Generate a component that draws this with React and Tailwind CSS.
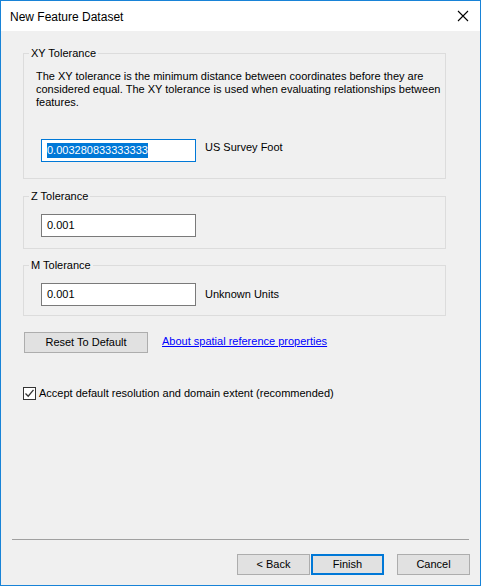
import React from "react";

function CloseIcon() {
  return (
    <svg width="12" height="12" viewBox="0 0 12 12" className="block">
      <path d="M1 1 L11 11 M11 1 L1 11" stroke="#000" strokeWidth="1.1" fill="none" />
    </svg>
  );
}

function CheckBox() {
  return (
    <div className="w-[13px] h-[13px] border border-[#333333] bg-white flex items-center justify-center">
      <svg width="11" height="11" viewBox="0 0 11 11" className="block">
        <path d="M1.5 5.5 L4.2 8.2 L9.5 1.8" stroke="#333333" strokeWidth="1.3" fill="none" />
      </svg>
    </div>
  );
}

function Group({ title, children, className = "", inner = "" }) {
  return (
    <fieldset className={"border border-[#dcdcdc] mx-[22px] w-[423px] " + className}>
      <legend className="ml-[5px] px-[2px] leading-[13px]">{title}</legend>
      <div className={inner}>{children}</div>
    </fieldset>
  );
}

function TextBox({ value, focused }) {
  return (
    <div
      className={
        "w-[155px] h-[23px] bg-white border flex items-center pl-[5px] " +
        (focused ? "border-[#0078d7]" : "border-[#7a7a7a]")
      }
    >
      {focused ? (
        <span className="bg-[#0078d7] text-white leading-[15px]">{value}</span>
      ) : (
        <span>{value}</span>
      )}
    </div>
  );
}

function Btn({ children, primary, className = "" }) {
  return (
    <button
      className={
        "h-[21px] bg-[#e1e1e1] flex items-center justify-center text-black " +
        (primary ? "border-2 border-[#0078d7] " : "border border-[#adadad] ") +
        className
      }
    >
      {children}
    </button>
  );
}

export default function App() {
  return (
    <div
      className="w-[481px] h-[586px] border border-[#1883d7] flex flex-col text-[11px] text-black"
      style={{ fontFamily: '"Liberation Sans", Arial, sans-serif' }}
    >
      {/* title bar */}
      <div className="h-[30px] bg-white flex items-center justify-between pl-[9px] pr-[11px]">
        <span className="text-[12px] pt-[1px]">New Feature Dataset</span>
        <CloseIcon />
      </div>

      <div className="flex-1 bg-[#f0f0f0] flex flex-col">
        <Group title="XY Tolerance" className="mt-[16px]" inner="pl-[12px] pt-[10px] pb-[16px]">
          <p className="leading-[13px]">
            The XY tolerance is the minimum distance between coordinates before they are
            <br />
            considered equal. The XY tolerance is used when evaluating relationships between
            <br />
            features.
          </p>
          <div className="flex items-center mt-[30px] ml-[5px] gap-[9px]">
            <TextBox value="0.003280833333333" focused />
            <span className="-mt-[7px]">US Survey Foot</span>
          </div>
        </Group>

        <Group title="Z Tolerance" className="mt-[11px]" inner="pl-[17px] pt-[11px] pb-[11px]">
          <TextBox value="0.001" />
        </Group>

        <Group title="M Tolerance" className="mt-[10px]" inner="pl-[17px] pt-[11px] pb-[9px]">
          <div className="flex items-center gap-[9px]">
            <TextBox value="0.001" />
            <span>Unknown Units</span>
          </div>
        </Group>

        <div className="flex items-center mt-[16px] ml-[23px] gap-[14px]">
          <Btn className="w-[124px]">Reset To Default</Btn>
          <a href="#" className="text-[#0000ff] underline -mt-[2px]">
            About spatial reference properties
          </a>
        </div>

        <div className="flex items-center mt-[32px] ml-[22px] gap-[3px]">
          <CheckBox />
          <span>Accept default resolution and domain extent (recommended)</span>
        </div>

        <div className="flex-1" />

        <div className="mx-[11px] h-px bg-[#a0a0a0]" />

        <div className="flex justify-end mt-[14px] mb-[10px] mr-[10px]">
          <Btn className="w-[73px]">&lt; Back</Btn>
          <Btn primary className="w-[73px] ml-[1px]">Finish</Btn>
          <Btn className="w-[73px] ml-[13px]">Cancel</Btn>
        </div>
      </div>
    </div>
  );
}
